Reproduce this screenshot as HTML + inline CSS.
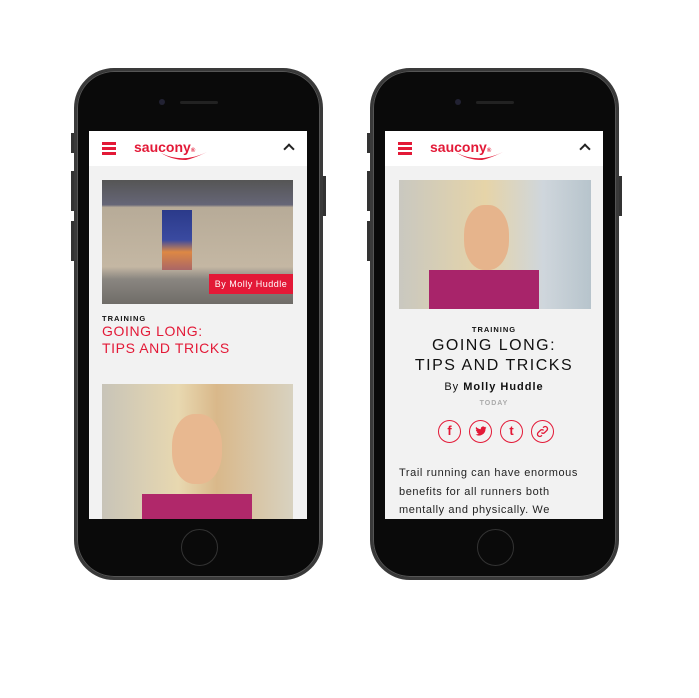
<!DOCTYPE html>
<html><head><meta charset="utf-8"><style>
*{margin:0;padding:0;box-sizing:border-box}
body{width:699px;height:698px;background:#fff;position:relative;overflow:hidden;font-family:"Liberation Sans",sans-serif}
.phone{position:absolute;top:68px;width:249px;height:512px;border-radius:40px;background:#0a0a0a;border:3px solid #3a3a3a;box-shadow:0 0 0 1px #555 inset}
.btn{position:absolute;width:3px;background:#333}
.screen{position:absolute;left:12px;top:60px;width:218px;height:388px;background:#f2f2f2;overflow:hidden}
.hdr{height:35px;background:#fff;position:relative}
.ham{position:absolute;left:13px;top:11px;width:14px;height:3px;background:#e31937;box-shadow:0 5px 0 #e31937,0 10px 0 #e31937}
.logo{position:absolute;left:45px;top:8px;color:#e31937;font-weight:bold;font-size:14px;letter-spacing:0px}
.car{position:absolute;right:14px;top:14px;width:8px;height:8px;border-left:2.5px solid #222;border-top:2.5px solid #222;transform:rotate(45deg)}
.cam{position:absolute;left:82px;top:28px;width:6px;height:6px;border-radius:50%;background:#223}
.spk{position:absolute;left:103px;top:30px;width:38px;height:3px;border-radius:2px;background:#222}
.home{position:absolute;left:104px;top:458px;width:37px;height:37px;border-radius:50%;border:1.5px solid #333}
.red{color:#e31937}
.sh{position:absolute;width:23px;height:23px;border:1.5px solid #e31937;border-radius:50%;color:#e31937;font-weight:bold;font-size:13px;text-align:center;line-height:20px}
</style></head><body>

<div class="phone" style="left:74px">
 <div class="btn" style="left:-6px;top:62px;height:20px"></div>
 <div class="btn" style="left:-6px;top:100px;height:40px"></div>
 <div class="btn" style="left:-6px;top:150px;height:40px"></div>
 <div class="btn" style="right:-6px;top:105px;height:40px"></div>
 <div class="cam"></div><div class="spk"></div>
 <div class="screen">
  <div class="hdr"><div class="ham"></div><div class="logo">saucony<span style="font-size:6px">®</span></div>
  <svg style="position:absolute;left:72px;top:20px" width="46" height="11"><path d="M0 2 Q22 13 46 1 Q34 7 25 9 Q11 9 0 2Z" fill="#e31937"/></svg><div class="car"></div></div>
  <div style="position:absolute;left:13px;top:49px;width:191px;height:124px;background:linear-gradient(#555 0,#667 20%,#b7ab98 22%,#c4b7a3 70%,#8a8680 80%,#6f6c68 100%)">
   <div style="position:absolute;left:60px;top:30px;width:30px;height:60px;background:linear-gradient(#2b3a8a,#3a4aa0 50%,#d84 70%,#a66)"></div>
   <div style="position:absolute;right:0;top:94px;width:84px;height:20px;background:#e31937;color:#fff;font-size:9px;line-height:20px;text-align:center;letter-spacing:.5px">By Molly Huddle</div>
  </div>
  <div style="position:absolute;left:13px;top:183px;font-size:7.5px;font-weight:bold;letter-spacing:1px;color:#111">TRAINING</div>
  <div class="red" style="position:absolute;left:13px;top:192px;font-size:14px;line-height:17px;letter-spacing:.6px">GOING LONG:<br>TIPS AND TRICKS</div>
  <div style="position:absolute;left:13px;top:253px;width:191px;height:140px;background:linear-gradient(90deg,#c8c4b8,#e8d8b0 40%,#d9b88a 60%,#d8d2c0)">
   <div style="position:absolute;left:70px;top:30px;width:50px;height:70px;border-radius:45%;background:#e8b890"></div>
   <div style="position:absolute;left:40px;top:110px;width:110px;height:30px;background:#b0286a"></div>
  </div>
 </div>
 <div class="home"></div>
</div>

<div class="phone" style="left:370px">
 <div class="btn" style="left:-6px;top:62px;height:20px"></div>
 <div class="btn" style="left:-6px;top:100px;height:40px"></div>
 <div class="btn" style="left:-6px;top:150px;height:40px"></div>
 <div class="btn" style="right:-6px;top:105px;height:40px"></div>
 <div class="cam"></div><div class="spk"></div>
 <div class="screen">
  <div class="hdr"><div class="ham"></div><div class="logo">saucony<span style="font-size:6px">®</span></div>
  <svg style="position:absolute;left:72px;top:20px" width="46" height="11"><path d="M0 2 Q22 13 46 1 Q34 7 25 9 Q11 9 0 2Z" fill="#e31937"/></svg><div class="car"></div></div>
  <div style="position:absolute;left:14px;top:49px;width:192px;height:129px;background:linear-gradient(90deg,#c9c8c0,#e6d4a8 45%,#cfd6dc 75%,#b7c4cc)">
   <div style="position:absolute;left:65px;top:25px;width:45px;height:65px;border-radius:45%;background:#e6b48c"></div>
   <div style="position:absolute;left:30px;top:90px;width:110px;height:39px;background:#a8246a"></div>
  </div>
  <div style="position:absolute;left:0;width:218px;text-align:center;top:194px;font-size:7.5px;font-weight:bold;letter-spacing:1px;color:#111">TRAINING</div>
  <div style="position:absolute;left:0;width:218px;text-align:center;top:205px;font-size:16px;line-height:20px;letter-spacing:1.5px;color:#111">GOING LONG:<br>TIPS AND TRICKS</div>
  <div style="position:absolute;left:0;width:218px;text-align:center;top:250px;font-size:11px;letter-spacing:1px;color:#111">By <b>Molly Huddle</b></div>
  <div style="position:absolute;left:0;width:218px;text-align:center;top:269px;font-size:7px;letter-spacing:1px;color:#aaa;font-weight:bold">TODAY</div>
  <div class="sh" style="left:53px;top:289px">f</div>
  <div class="sh" style="left:84px;top:289px"><svg width="12" height="12" viewBox="0 0 24 24" style="margin-top:4px"><path fill="#e31937" d="M23 5c-.8.4-1.7.6-2.6.7.9-.6 1.6-1.4 2-2.5-.9.5-1.900.9-2.900 1.100a4.600 4.600 0 0 0-7.800 4.200C7.900 8.300 4.500 6.500 2.300 3.700a4.600 4.600 0 0 0 1.400 6.100c-.7 0-1.400-.2-2-.6 0 2.200 1.600 4.100 3.700 4.500-.7.200-1.400.200-2.100.1.600 1.800 2.300 3.200 4.300 3.200A9.200 9.200 0 0 1 1 19a13 13 0 0 0 20-11.600c.8-.6 1.500-1.400 2-2.400z"/></svg></div>
  <div class="sh" style="left:115px;top:289px">t</div>
  <div class="sh" style="left:146px;top:289px"><svg width="13" height="13" viewBox="0 0 24 24" style="margin-top:4px" fill="none" stroke="#e31937" stroke-width="2.5"><path d="M10 14a4 4 0 0 0 6 0l4-4a4 4 0 0 0-6-6l-1 1"/><path d="M14 10a4 4 0 0 0-6 0l-4 4a4 4 0 0 0 6 6l1-1"/></svg></div>
  <div style="position:absolute;left:14px;top:333px;font-size:11px;line-height:18.5px;letter-spacing:.6px;color:#222">Trail running can have enormous<br>benefits for all runners both<br>mentally and physically. We</div>
 </div>
 <div class="home"></div>
</div>
</body></html>
